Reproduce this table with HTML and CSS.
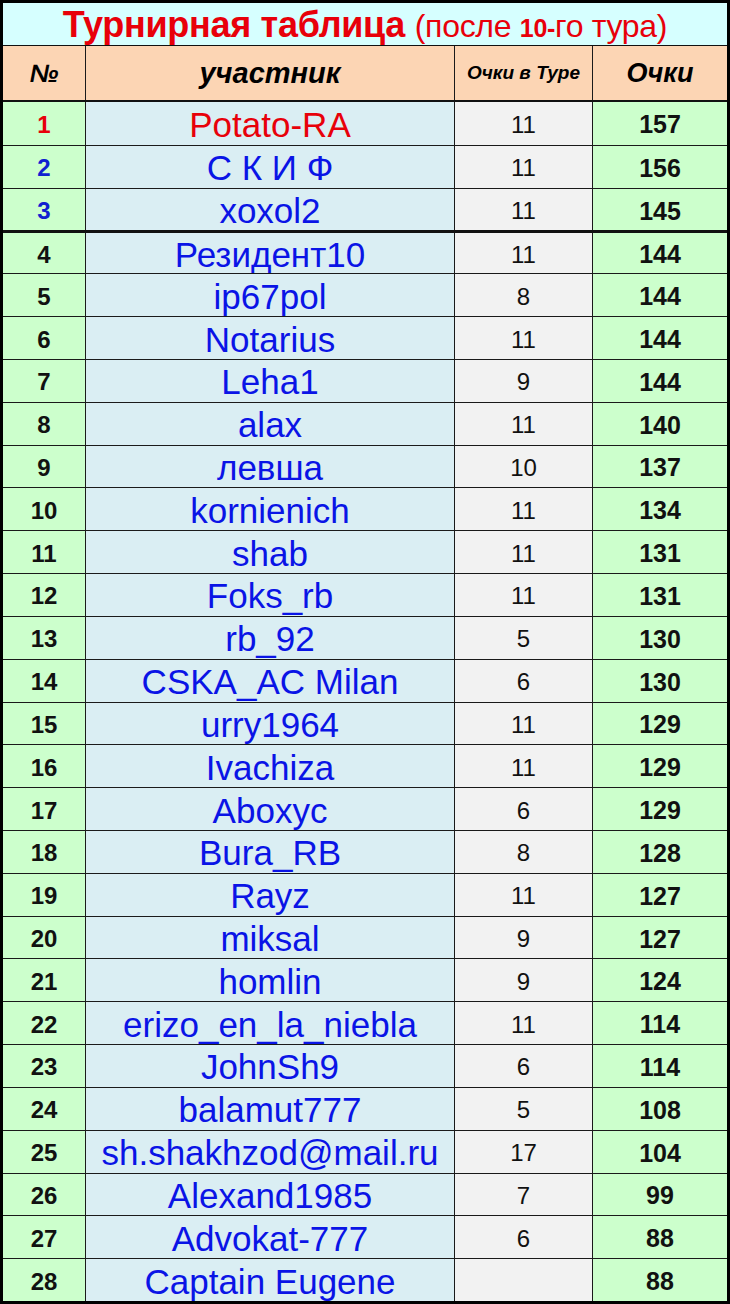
FILE: index.html
```html
<!DOCTYPE html>
<html lang="ru">
<head>
<meta charset="utf-8">
<title>Турнирная таблица</title>
<link rel="stylesheet" href="styles.css">
</head>
<body>
<div class="sheet">
  <div class="title"><b>Турнирная таблица</b> <span class="paren">(после <b class="ten">10-</b>го тура)</span></div>
  <div class="row head">
    <div class="c num">№</div>
    <div class="c name">участник</div>
    <div class="c tour">Очки в Туре</div>
    <div class="c pts">Очки</div>
  </div>
  <div class="body">
    <div class="row"><div class="c num red">1</div><div class="c name red">Potato-RA</div><div class="c tour">11</div><div class="c pts">157</div></div>
    <div class="row"><div class="c num blue">2</div><div class="c name">С К И Ф</div><div class="c tour">11</div><div class="c pts">156</div></div>
    <div class="row"><div class="c num blue">3</div><div class="c name">xoxol2</div><div class="c tour">11</div><div class="c pts">145</div></div>
    <div class="row sep"><div class="c num">4</div><div class="c name">Резидент10</div><div class="c tour">11</div><div class="c pts">144</div></div>
    <div class="row"><div class="c num">5</div><div class="c name">ip67pol</div><div class="c tour">8</div><div class="c pts">144</div></div>
    <div class="row"><div class="c num">6</div><div class="c name">Notarius</div><div class="c tour">11</div><div class="c pts">144</div></div>
    <div class="row"><div class="c num">7</div><div class="c name">Leha1</div><div class="c tour">9</div><div class="c pts">144</div></div>
    <div class="row"><div class="c num">8</div><div class="c name">alax</div><div class="c tour">11</div><div class="c pts">140</div></div>
    <div class="row"><div class="c num">9</div><div class="c name">левша</div><div class="c tour">10</div><div class="c pts">137</div></div>
    <div class="row"><div class="c num">10</div><div class="c name">kornienich</div><div class="c tour">11</div><div class="c pts">134</div></div>
    <div class="row"><div class="c num">11</div><div class="c name">shab</div><div class="c tour">11</div><div class="c pts">131</div></div>
    <div class="row"><div class="c num">12</div><div class="c name">Foks_rb</div><div class="c tour">11</div><div class="c pts">131</div></div>
    <div class="row"><div class="c num">13</div><div class="c name">rb_92</div><div class="c tour">5</div><div class="c pts">130</div></div>
    <div class="row"><div class="c num">14</div><div class="c name">CSKA_AC Milan</div><div class="c tour">6</div><div class="c pts">130</div></div>
    <div class="row"><div class="c num">15</div><div class="c name">urry1964</div><div class="c tour">11</div><div class="c pts">129</div></div>
    <div class="row"><div class="c num">16</div><div class="c name">Ivachiza</div><div class="c tour">11</div><div class="c pts">129</div></div>
    <div class="row"><div class="c num">17</div><div class="c name">Aboxyc</div><div class="c tour">6</div><div class="c pts">129</div></div>
    <div class="row"><div class="c num">18</div><div class="c name">Bura_RB</div><div class="c tour">8</div><div class="c pts">128</div></div>
    <div class="row"><div class="c num">19</div><div class="c name">Rayz</div><div class="c tour">11</div><div class="c pts">127</div></div>
    <div class="row"><div class="c num">20</div><div class="c name">miksal</div><div class="c tour">9</div><div class="c pts">127</div></div>
    <div class="row"><div class="c num">21</div><div class="c name">homlin</div><div class="c tour">9</div><div class="c pts">124</div></div>
    <div class="row"><div class="c num">22</div><div class="c name">erizo_en_la_niebla</div><div class="c tour">11</div><div class="c pts">114</div></div>
    <div class="row"><div class="c num">23</div><div class="c name">JohnSh9</div><div class="c tour">6</div><div class="c pts">114</div></div>
    <div class="row"><div class="c num">24</div><div class="c name">balamut777</div><div class="c tour">5</div><div class="c pts">108</div></div>
    <div class="row"><div class="c num">25</div><div class="c name">sh.shakhzod@mail.ru</div><div class="c tour">17</div><div class="c pts">104</div></div>
    <div class="row"><div class="c num">26</div><div class="c name">Alexand1985</div><div class="c tour">7</div><div class="c pts">99</div></div>
    <div class="row"><div class="c num">27</div><div class="c name">Advokat-777</div><div class="c tour">6</div><div class="c pts">88</div></div>
    <div class="row"><div class="c num">28</div><div class="c name">Captain Eugene</div><div class="c tour"></div><div class="c pts">88</div></div>
  </div>
</div>
</body>
</html>
```

FILE: styles.css
```css
html, body {
  margin: 0;
  padding: 0;
  background: #000;
}
.sheet {
  box-sizing: border-box;
  width: 730px;
  height: 1304px;
  border: 3px solid #000;
  display: flex;
  flex-direction: column;
  font-family: "Liberation Sans", Arial, sans-serif;
  background: #dff;
}
.title {
  height: 42px;
  flex: none;
  border-bottom: 1px solid #111;
  background: #d6ffff;
  color: #e8000a;
  text-align: center;
  font-size: 36px;
  line-height: 44px;
  white-space: nowrap;
  letter-spacing: -0.3px;
}
.title .paren {
  font-weight: normal;
  font-size: 32px;
}
.title .ten {
  font-size: 25px;
}
.row {
  display: grid;
  grid-template-columns: 83px 369px 138px 1fr;
  border-top: 1px solid #1a1a1a;
  min-height: 0;
}
.row:first-child {
  border-top: none;
}
.row.sep {
  border-top: 3px solid #111;
}
.head {
  flex: none;
  height: 54px;
  border-top: none;
  border-bottom: 2px solid #111;
  background: #fcd5b4;
  font-style: italic;
  font-weight: bold;
  font-family: "Liberation Sans Narrow", "Liberation Sans", Arial, sans-serif;
}
.c {
  display: flex;
  align-items: center;
  justify-content: center;
  border-right: 1px solid #1a1a1a;
  white-space: nowrap;
  overflow: hidden;
}
.body .c {
  padding-top: 3px;
}
.c.pts {
  border-right: none;
}
.body {
  flex: 1;
  display: grid;
  grid-auto-rows: 1fr;
  min-height: 0;
}
.body .num {
  background: #ccffcc;
  font-weight: bold;
  font-size: 24px;
  color: #111;
}
.body .name {
  background: #daeef3;
  font-size: 35px;
  color: #0a14e6;
}
.body .tour {
  background: #f2f2f2;
  font-size: 24px;
  color: #111;
}
.body .pts {
  background: #ccffcc;
  font-weight: bold;
  font-size: 25px;
  color: #111;
}
.body .red {
  color: #e8000a;
}
.body .num.blue {
  color: #1020d0;
}
.head .num {
  font-size: 25px;
}
.head .name {
  font-size: 29px;
}
.head .tour {
  font-size: 19px;
}
.head .pts {
  font-size: 27px;
}
```
